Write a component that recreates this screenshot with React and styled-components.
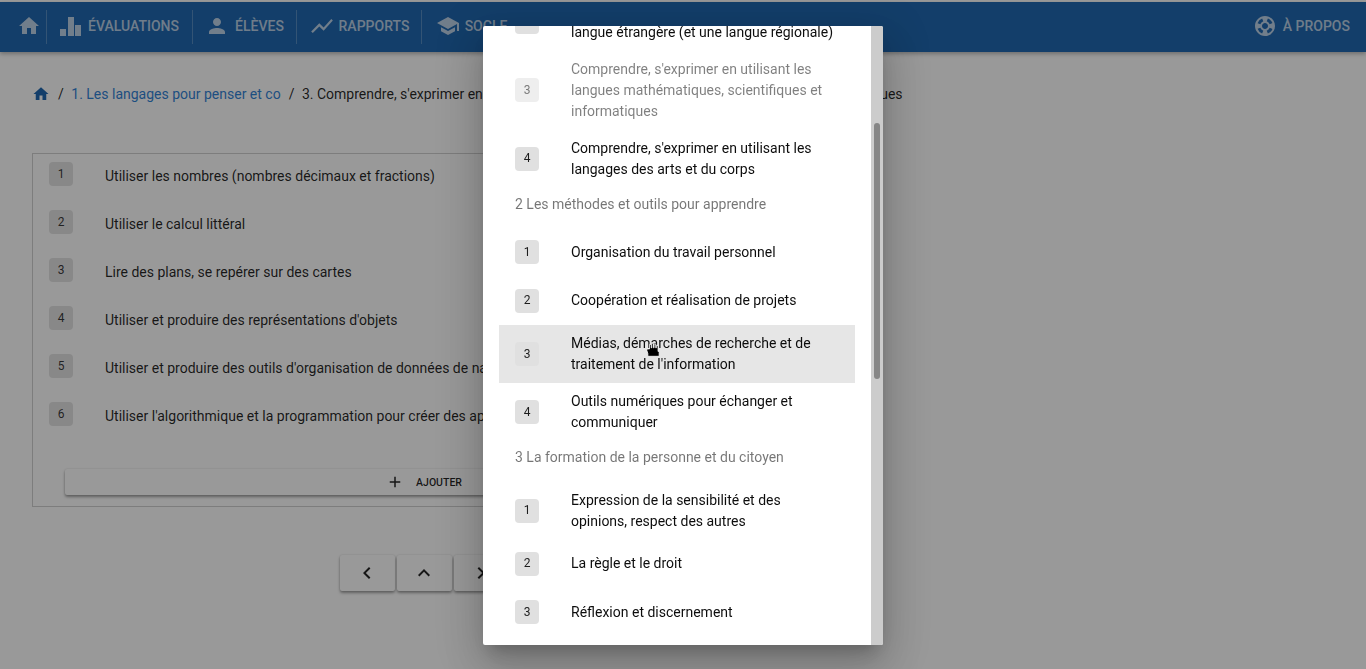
import React, { useLayoutEffect, useRef } from "react";
import styled, { createGlobalStyle } from "styled-components";
import {
  MdHome,
  MdPerson,
  MdShowChart,
  MdSchool,
  MdSupport,
  MdAdd,
  MdChevronLeft,
  MdChevronRight,
  MdExpandLess,
} from "react-icons/md";

const GlobalStyle = createGlobalStyle`
  html, body {
    margin: 0;
    height: 100%;
    background: #fff;
    overflow: hidden;
  }
  body {
    font-family: Roboto, "Liberation Sans", sans-serif;
    font-size: 14px;
    color: rgba(0, 0, 0, 0.95);
  }
`;

const Page = styled.div`
  padding-top: 2px;
`;

const Navbar = styled.header`
  height: 50px;
  background: #0958a8;
  display: flex;
  align-items: center;
  justify-content: space-between;
  box-shadow: 0 2px 4px rgba(0, 0, 0, 0.3);
  color: rgba(255, 255, 255, 0.7);
`;

const NavGroup = styled.nav`
  display: flex;
  align-items: center;
`;

const NavItem = styled.div`
  box-sizing: border-box;
  height: 34px;
  padding: 0 0 2px ${(p) => p.$padLeft ?? 0}px;
  display: flex;
  align-items: center;
  justify-content: center;
  gap: ${(p) => p.$gap ?? 6}px;
  width: ${(p) => (p.$width ? `${p.$width}px` : "auto")};
  margin-right: ${(p) => p.$marginRight ?? 0}px;
  border-right: ${(p) => (p.$last ? "none" : "1px solid rgba(255, 255, 255, 0.24)")};
  font-size: 14px;
  font-weight: 500;
  text-transform: uppercase;
  white-space: nowrap;
  svg {
    font-size: ${(p) => p.$iconSize ?? 24}px;
    flex: none;
  }
`;

const Breadcrumbs = styled.div`
  display: flex;
  align-items: center;
  height: 20px;
  margin: 32px 0 0 32px;
  white-space: nowrap;
  svg {
    font-size: 18px;
    color: #0958a8;
  }
`;

const Slash = styled.span`
  margin: 0 7.5px 0 8px;
`;

const CrumbLink = styled.span`
  color: #1976d2;
`;

const Content = styled.main`
  width: 784px;
  margin: 49px 0 0 32px;
`;

const CardBox = styled.section`
  height: 352px;
  border: 1px solid rgba(0, 0, 0, 0.2);
`;

const SkillList = styled.ul`
  list-style: none;
  margin: -4px 0 0;
  padding: 0;
`;

const SkillRow = styled.li`
  display: flex;
  align-items: center;
  height: 48px;
  padding: 0 16px;
  white-space: nowrap;
`;

const SkillLabel = styled.span`
  padding-top: 3px;
`;

const Badge = styled.span`
  flex: none;
  width: 24px;
  height: 24px;
  margin-right: 32px;
  display: flex;
  align-items: center;
  justify-content: center;
  border-radius: 4px;
  font-size: 12px;
  background: ${(p) => (p.$disabled ? "#eeeeee" : "#e0e0e0")};
  color: ${(p) => (p.$disabled ? "rgba(0, 0, 0, 0.5)" : "rgba(0, 0, 0, 0.87)")};
`;

const AddButton = styled.button`
  display: flex;
  align-items: center;
  justify-content: center;
  width: 718px;
  height: 26px;
  margin: 31px 0 0 32px;
  border: none;
  border-radius: 2px;
  background: #fff;
  color: rgba(0, 0, 0, 0.95);
  font-family: inherit;
  font-size: 10.5px;
  font-weight: 500;
  box-shadow: 0 2px 3px rgba(0, 0, 0, 0.4), 0 0 2px rgba(0, 0, 0, 0.15);
  svg {
    font-size: 18px;
    margin-right: 12px;
  }
`;

const Pager = styled.div`
  display: flex;
  justify-content: center;
  gap: 2px;
  margin-top: 48px;
`;

const PagerButton = styled.button`
  display: flex;
  align-items: center;
  justify-content: center;
  width: 55px;
  height: 36px;
  padding: 0;
  border: none;
  border-radius: 2px;
  background: #fff;
  color: rgba(0, 0, 0, 0.95);
  box-shadow: 0 2px 3px rgba(0, 0, 0, 0.4), 0 0 2px rgba(0, 0, 0, 0.15);
  svg {
    font-size: 24px;
  }
`;

const Overlay = styled.div`
  position: fixed;
  inset: 0;
  background: rgba(33, 33, 33, 0.46);
`;

const Dialog = styled.div`
  position: fixed;
  top: 26px;
  left: 483px;
  width: 400px;
  height: 619px;
  display: flex;
  background: #fff;
  border-radius: 2px;
  overflow: hidden;
  box-shadow: 0 11px 15px -7px rgba(0, 0, 0, 0.2), 0 24px 38px 3px rgba(0, 0, 0, 0.14),
    0 9px 46px 8px rgba(0, 0, 0, 0.12);
`;

const Scroller = styled.div`
  flex: 1;
  overflow: hidden;
`;

const ScrollTrack = styled.div`
  flex: none;
  width: 12px;
  background: #cccccc;
`;

const ScrollThumb = styled.div`
  width: 6px;
  height: 256px;
  margin: 97px 0 0 3px;
  border-radius: 3px;
  background: #868686;
`;

const DialogList = styled.div`
  padding: 103.25px 16px 200px;
`;

const DomainTitle = styled.div`
  height: 40.5px;
  padding: 7px 16px 0;
  box-sizing: border-box;
  line-height: 18px;
  color: rgba(0, 0, 0, 0.54);
`;

const DomainRow = styled.div`
  display: flex;
  align-items: center;
  min-height: 48.4px;
  padding: 8px 16px;
  box-sizing: border-box;
  line-height: 21px;
  background: ${(p) => (p.$hover ? "#e6e6e6" : "transparent")};
  color: ${(p) => (p.$disabled ? "rgba(0, 0, 0, 0.5)" : "rgba(0, 0, 0, 0.95)")};
`;

const Cursor = styled.svg`
  position: fixed;
  left: 645px;
  top: 341px;
  width: 17px;
  height: 17px;
`;

const skills = [
  "Utiliser les nombres (nombres décimaux et fractions)",
  "Utiliser le calcul littéral",
  "Lire des plans, se repérer sur des cartes",
  "Utiliser et produire des représentations d'objets",
  "Utiliser et produire des outils d'organisation de données de nature variée",
  "Utiliser l'algorithmique et la programmation pour créer des applications simples",
];

const domains = [
  {
    title: "1 Les langages pour penser et communiquer",
    items: [
      { label: "Comprendre, s'exprimer en utilisant la langue française" },
      { label: "Comprendre, s'exprimer en utilisant une langue étrangère (et une langue régionale)" },
      {
        label: "Comprendre, s'exprimer en utilisant les langues mathématiques, scientifiques et informatiques",
        disabled: true,
      },
      { label: "Comprendre, s'exprimer en utilisant les langages des arts et du corps" },
    ],
  },
  {
    title: "2 Les méthodes et outils pour apprendre",
    items: [
      { label: "Organisation du travail personnel" },
      { label: "Coopération et réalisation de projets" },
      { label: "Médias, démarches de recherche et de traitement de l'information", hover: true },
      { label: "Outils numériques pour échanger et communiquer" },
    ],
  },
  {
    title: "3 La formation de la personne et du citoyen",
    items: [
      { label: "Expression de la sensibilité et des opinions, respect des autres" },
      { label: "La règle et le droit" },
      { label: "Réflexion et discernement" },
    ],
  },
];

function App() {
  const scrollerRef = useRef(null);

  // the dialog is photographed part way down its list
  useLayoutEffect(() => {
    scrollerRef.current.scrollTop = 235;
  }, []);

  return (
    <>
      <GlobalStyle />
      <Page>
        <Navbar>
          <NavGroup>
            <NavItem $width={47} $padLeft={12}>
              <MdHome />
            </NavItem>
            <NavItem $width={146} $gap={7}>
              <svg width="21" height="19" viewBox="0 0 21 19" fill="currentColor" style={{ fontSize: "inherit" }}>
                <rect x="0" y="12" width="6" height="7" />
                <rect x="8" y="0" width="6" height="19" />
                <rect x="15" y="8" width="6" height="11" />
              </svg>
              ÉVALUATIONS
            </NavItem>
            <NavItem $width={104}>
              <MdPerson />
              ÉLÈVES
            </NavItem>
            <NavItem $width={125} $gap={4} $iconSize={26}>
              <MdShowChart />
              RAPPORTS
            </NavItem>
            <NavItem $width={99} $gap={5} $last>
              <MdSchool />
              SOCLE
            </NavItem>
          </NavGroup>
          <NavItem $marginRight={16} $last>
            <MdSupport />À PROPOS
          </NavItem>
        </Navbar>

        <Breadcrumbs>
          <MdHome />
          <Slash>/</Slash>
          <CrumbLink>1. Les langages pour penser et co</CrumbLink>
          <Slash>/</Slash>
          <span>3. Comprendre, s'exprimer en utilisant les langues mathématiques, scientifiques et informatiques</span>
        </Breadcrumbs>

        <Content>
          <CardBox>
            <SkillList>
              {skills.map((label, i) => (
                <SkillRow key={label}>
                  <Badge>{i + 1}</Badge>
                  <SkillLabel>{label}</SkillLabel>
                </SkillRow>
              ))}
            </SkillList>
            <AddButton>
              <MdAdd />
              AJOUTER
            </AddButton>
          </CardBox>
          <Pager>
            <PagerButton>
              <MdChevronLeft />
            </PagerButton>
            <PagerButton>
              <MdExpandLess />
            </PagerButton>
            <PagerButton>
              <MdChevronRight />
            </PagerButton>
          </Pager>
        </Content>
      </Page>

      <Overlay />

      <Dialog>
        <Scroller ref={scrollerRef}>
          <DialogList>
            {domains.map((domain) => (
              <div key={domain.title}>
                <DomainTitle>{domain.title}</DomainTitle>
                {domain.items.map((item, i) => (
                  <DomainRow key={item.label} $hover={item.hover} $disabled={item.disabled}>
                    <Badge $disabled={item.disabled}>{i + 1}</Badge>
                    <span>{item.label}</span>
                  </DomainRow>
                ))}
              </div>
            ))}
          </DialogList>
        </Scroller>
        <ScrollTrack>
          <ScrollThumb />
        </ScrollTrack>
      </Dialog>

      <Cursor viewBox="0 0 15 15">
        <path
          d="M2 7h2V3h1.500v3H6V2h1.500v4H8V2.500h1.500V6h.5V4h1.500v5l1 1v3.500H2.500V11L1.500 8z"
          fill="#000"
          stroke="#fff"
          strokeWidth="0.7"
        />
      </Cursor>
    </>
  );
}

export default App;
